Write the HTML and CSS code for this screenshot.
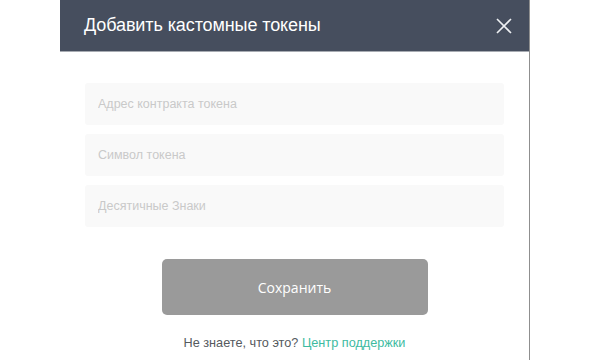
FILE: index.html
```html
<!DOCTYPE html>
<html lang="ru">
<head>
<meta charset="utf-8">
<title>Добавить кастомные токены</title>
<link rel="stylesheet" href="styles.css">
</head>
<body>
<div class="modal">
  <div class="modal-header">
    <h1 class="modal-title">Добавить кастомные токены</h1>
    <button class="close" aria-label="Закрыть">
      <svg width="16" height="16" viewBox="0 0 16 16"><path d="M1 1 L15 15 M15 1 L1 15" stroke="#eef0f3" stroke-width="1.6" fill="none"/></svg>
    </button>
  </div>
  <div class="modal-body">
    <div class="fields">
      <input class="field" type="text" placeholder="Адрес контракта токена">
      <input class="field" type="text" placeholder="Символ токена">
      <input class="field" type="text" placeholder="Десятичные Знаки">
    </div>
    <button class="save">Сохранить</button>
    <p class="help">Не знаете, что это? <a class="help-link" href="#">Центр поддержки</a></p>
  </div>
</div>
</body>
</html>
```

FILE: styles.css
```css
html, body {
  margin: 0;
  padding: 0;
  background: #ffffff;
}
body {
  font-family: "Liberation Sans", Arial, sans-serif;
  height: 360px;
  overflow: hidden;
}
.modal {
  margin-left: 60px;
  width: 469px;
  height: 360px;
  border-right: 1px solid #8f8f8f;
  background: #fff;
}
.modal-header {
  height: 52px;
  background: #464e5e;
  border-bottom: 1px solid #a7abb2;
  box-sizing: border-box;
  display: flex;
  align-items: center;
  justify-content: space-between;
  padding: 0 17px 0 24px;
}
.modal-title {
  margin: 0;
  font-size: 18px;
  font-weight: normal;
  color: #ffffff;
  letter-spacing: -0.1px;
}
.close {
  background: none;
  border: 0;
  padding: 0;
  width: 16px;
  height: 16px;
  display: flex;
}
.modal-body {
  padding-top: 31px;
  display: flex;
  flex-direction: column;
  align-items: center;
}
.fields {
  display: flex;
  flex-direction: column;
  gap: 9px;
  width: 419px;
}
.field {
  height: 42px;
  box-sizing: border-box;
  border: 0;
  border-radius: 3px;
  background: #f9f9f9;
  padding: 0 13px;
  font-family: "Liberation Sans", Arial, sans-serif;
  font-size: 12.5px;
  color: #444;
  outline: none;
}
.field::placeholder {
  color: #c9c9c9;
}
.save {
  margin-top: 32px;
  width: 266px;
  height: 56px;
  border: 0;
  border-radius: 5px;
  background: #9a9a9a;
  color: #ffffff;
  font-family: "Open Sans", "Liberation Sans", sans-serif;
  font-size: 14px;
}
.help {
  margin: 20px 0 0;
  font-size: 12.7px;
  line-height: 16px;
  color: #555a5e;
}
.help-link {
  color: #3dbb9f;
  text-decoration: none;
}
```
